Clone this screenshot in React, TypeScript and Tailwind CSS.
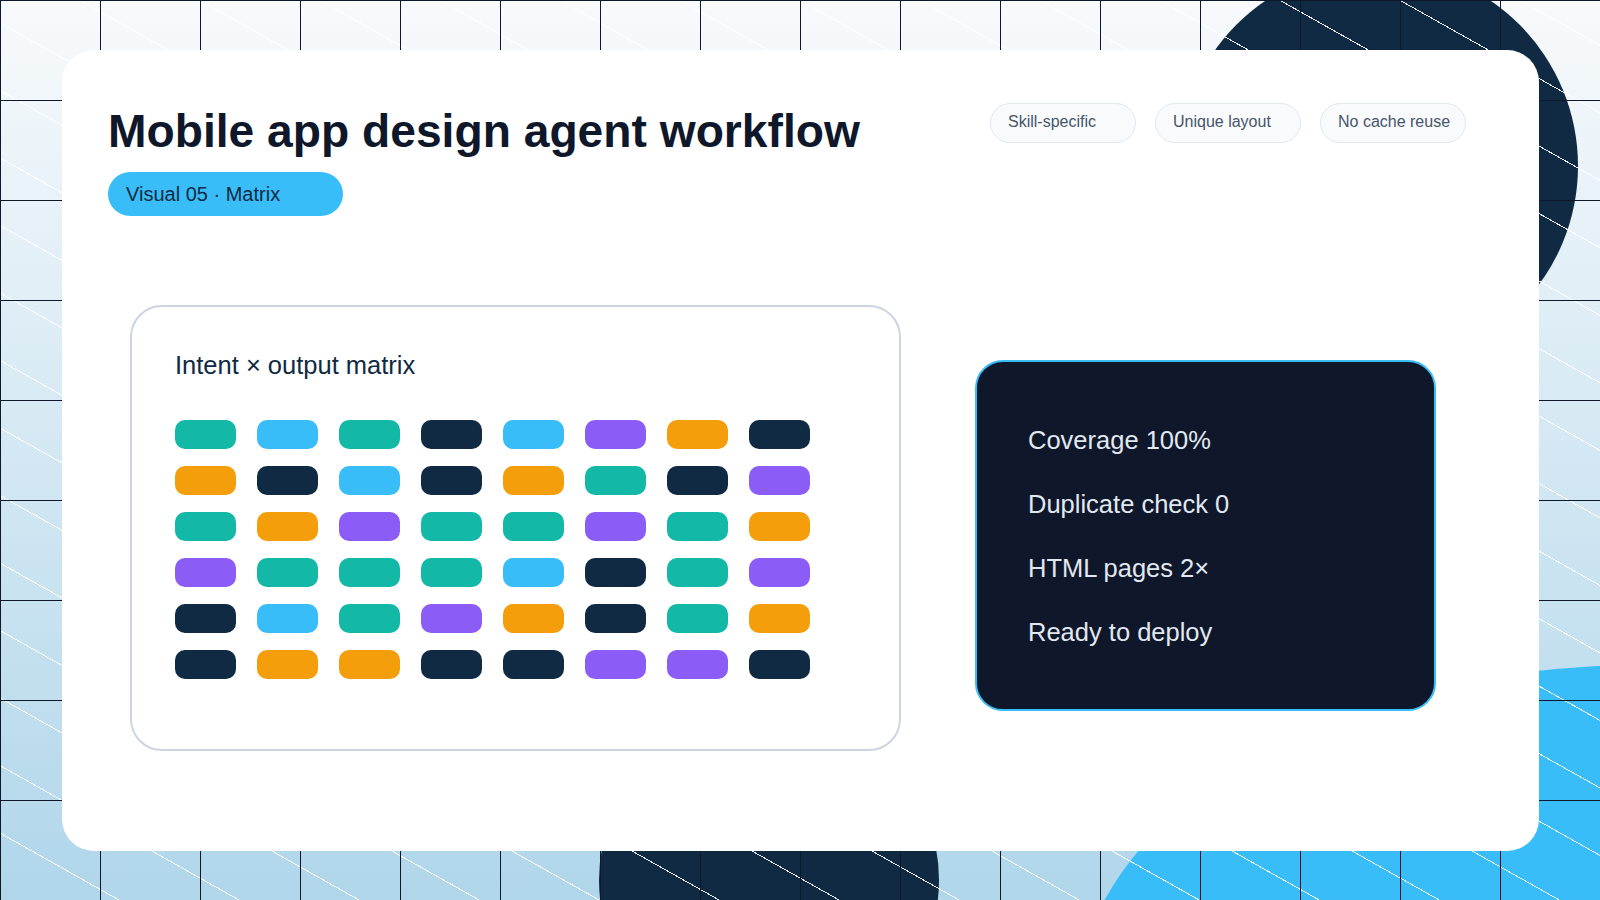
const CELLS = [
  ['t', 'b', 't', 'n', 'b', 'p', 'a', 'n'],
  ['a', 'n', 'b', 'n', 'a', 't', 'n', 'p'],
  ['t', 'a', 'p', 't', 't', 'p', 't', 'a'],
  ['p', 't', 't', 't', 'b', 'n', 't', 'p'],
  ['n', 'b', 't', 'p', 'a', 'n', 't', 'a'],
  ['n', 'a', 'a', 'n', 'n', 'p', 'p', 'n'],
];

const CELL_COLORS: Record<string, string> = {
  t: 'bg-[#14b8a6]',
  b: 'bg-[#38bdf8]',
  n: 'bg-[#102a43]',
  a: 'bg-[#f59e0b]',
  p: 'bg-[#8b5cf6]',
};

const TAGS = ['Skill-specific', 'Unique layout', 'No cache reuse'];
const STATS = ['Coverage 100%', 'Duplicate check 0', 'HTML pages 2×', 'Ready to deploy'];

const Tag = ({ label }: { label: string }) => (
  <div className="w-[146px] h-[40px] rounded-[20px] border border-[#e2e8f0] bg-[#f8fafc] pl-[17px] pt-[7px] text-[16px] leading-[22px] text-[#475569]">
    {label}
  </div>
);

const Background = () => (
  <>
    <div className="absolute left-[1178px] top-[-34px] w-[400px] h-[400px] rounded-full bg-[#102a43]" />
    <div className="absolute left-[599px] top-[710px] w-[340px] h-[340px] rounded-full bg-[#102a43]" />
    <div className="absolute left-[1077px] top-[665px] w-[1130px] h-[680px] rounded-[50%] bg-[#38bdf8]" />
    <div className="absolute inset-0 bg-[repeating-linear-gradient(to_top_right,transparent_0px,transparent_57.84px,#ffffff_57.84px,#ffffff_58.84px)] opacity-90" />
    <div className="absolute inset-0 bg-[linear-gradient(#0f172a_1px,transparent_1px),linear-gradient(90deg,#0f172a_1px,transparent_1px)] bg-[size:100px_100px]" />
  </>
);

export default function App() {
  return (
    <div
      className="relative w-[1600px] h-[900px] overflow-hidden bg-[linear-gradient(180deg,#f8fafc,#b0d6ea)] pl-[62px] pt-[50px] text-[#0f172a]"
      style={{ fontFamily: '"Liberation Sans", Arial, sans-serif' }}
    >
      <Background />
      <div className="relative w-[1477px] h-[801px] rounded-[32px] bg-white">
        <div className="flex justify-between pl-[46px] pr-[73px] pt-[54px]">
          <div className="flex flex-col items-start">
            <h1 className="text-[46.2px] leading-[54px] font-bold text-[#0f172a]">
              Mobile app design agent workflow
            </h1>
            <div className="mt-[14px] w-[235px] h-[44px] rounded-[22px] bg-[#38bdf8] pl-[18px] text-[20px] leading-[44px] text-[#102a43]">
              Visual 05 · Matrix
            </div>
          </div>
          <div className="flex gap-[19px] -mt-[1px]">
            {TAGS.map((tag) => (
              <Tag key={tag} label={tag} />
            ))}
          </div>
        </div>

        <div className="flex items-start mt-[89px] pl-[68px]">
          <div className="w-[771px] h-[446px] rounded-[32px] border-2 border-[#cbd5e1] pl-[43px] pt-[40px]">
            <div className="text-[25.5px] leading-[36px] text-[#102a43]">Intent × output matrix</div>
            <div className="grid grid-cols-8 gap-x-[21px] gap-y-[17px] w-[635px] mt-[37px]">
              {CELLS.flat().map((c, i) => (
                <div key={i} className={`h-[29px] rounded-[10px] ${CELL_COLORS[c]}`} />
              ))}
            </div>
          </div>
          <div className="ml-[74px] mt-[55px] w-[461px] h-[351px] rounded-[28px] border-2 border-[#38bdf8] bg-[#0f172a] pl-[51px] pt-[60px]">
            <div className="flex flex-col gap-[28px] text-[25.5px] leading-[36px] text-[#e2e8f0]">
              {STATS.map((s) => (
                <div key={s}>{s}</div>
              ))}
            </div>
          </div>
        </div>
      </div>
    </div>
  );
}
